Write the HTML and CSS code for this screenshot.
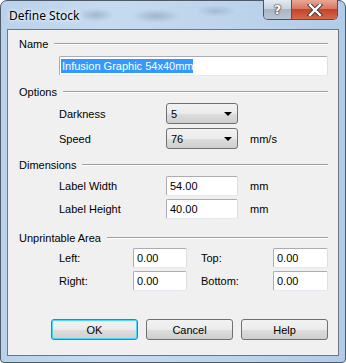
FILE: index.html
```html
<!DOCTYPE html>
<html lang="en">
<head>
  <meta charset="UTF-8" />
  <title>Define Stock</title>
  <link rel="stylesheet" href="styles.css">
</head>
<body>

  <div class="window">
    <div class="titlebar">
      <span class="title">Define Stock</span>
      <div class="caption-btns">
        <span class="cap-btn help-btn">?</span>
        <span class="cap-btn close-btn">
          <svg width="16" height="12" viewBox="0 0 16 12">
            <path d="M3 1 L13 11 M13 1 L3 11" stroke="#3a3a3a" stroke-width="4.2" stroke-linecap="square"/>
            <path d="M3 1 L13 11 M13 1 L3 11" stroke="#fff" stroke-width="2.4" stroke-linecap="square"/>
          </svg>
        </span>
      </div>
    </div>

    <div class="client">
      <div class="group-head head-name"><span>Name</span><i class="rule"></i></div>
      <div class="name-row">
        <div class="textbox"><span class="sel">Infusion Graphic 54x40mm</span></div>
      </div>

      <div class="group-head head-options"><span>Options</span><i class="rule"></i></div>
      <div class="grid options-grid">
        <label>Darkness</label>
        <div class="combo"><span>5</span><i class="arrow"></i></div>
        <span></span>
        <label>Speed</label>
        <div class="combo"><span>76</span><i class="arrow"></i></div>
        <span class="unit">mm/s</span>
      </div>

      <div class="group-head head-dims"><span>Dimensions</span><i class="rule"></i></div>
      <div class="grid dims-grid">
        <label>Label Width</label>
        <div class="textbox">54.00</div>
        <span class="unit">mm</span>
        <label>Label Height</label>
        <div class="textbox">40.00</div>
        <span class="unit">mm</span>
      </div>

      <div class="group-head head-area"><span>Unprintable Area</span><i class="rule"></i></div>
      <div class="grid area-grid">
        <label>Left:</label>
        <div class="textbox">0.00</div>
        <label class="second">Top:</label>
        <div class="textbox">0.00</div>
        <label>Right:</label>
        <div class="textbox">0.00</div>
        <label class="second">Bottom:</label>
        <div class="textbox">0.00</div>
      </div>

      <div class="buttons">
        <button class="default">OK</button>
        <button>Cancel</button>
        <button>Help</button>
      </div>
    </div>
  </div>

</body>
</html>
```

FILE: styles.css
```css
body {
  margin: 0;
  font-family: "Liberation Sans", Arial, sans-serif;
  font-size: 11px;
  color: #000;
  background: #fff;
}
.window {
  width: 346px;
  height: 363px;
  box-sizing: border-box;
  padding: 0 6px 6px 6px;
  border: 1px solid #4d5a68;
  border-radius: 7px 7px 4px 4px;
  background:
    radial-gradient(ellipse 18px 7px at 95px 14px, rgba(120,140,160,0.45), transparent),
    radial-gradient(ellipse 24px 7px at 155px 15px, rgba(120,140,160,0.45), transparent),
    radial-gradient(ellipse 20px 6px at 215px 10px, rgba(120,140,160,0.35), transparent),
    linear-gradient(90deg, #b9d1ea, #c6dbf0 30%, #bcd3ec 70%, #b2cbe6);
}
.titlebar {
  display: flex;
  justify-content: space-between;
  align-items: flex-start;
  height: 28px;
}
.title {
  font-family: "Noto Sans", "Open Sans", sans-serif;
  font-size: 12px;
  margin: 6px 0 0 2px;
  text-shadow: 0 0 6px #fff, 0 0 3px #fff;
}
.caption-btns {
  display: flex;
  margin-top: -1px;
  margin-right: 1px;
  border: 1px solid #4a5564;
  border-top: none;
  border-radius: 0 0 5px 5px;
  overflow: hidden;
  height: 19px;
}
.cap-btn {
  display: flex;
  align-items: center;
  justify-content: center;
  height: 19px;
}
.help-btn {
  width: 27px;
  border-right: 1px solid #4a5564;
  background: linear-gradient(#e4eaf1, #c9d3de 45%, #a9b6c5 50%, #b9c5d3);
  color: #fff;
  font-family: "DejaVu Sans", sans-serif;
  font-weight: bold;
  font-size: 13px;
  text-shadow: 0 0 1px #333, 0 0 1px #333, 0 0 2px #333;
}
.close-btn {
  width: 45px;
  background: linear-gradient(#e9a796, #d97762 45%, #c4442a 50%, #d4684a);
}
.client {
  box-sizing: border-box;
  height: 327px;
  border: 1px solid #6e7884;
  background: #f0f0f0;
  padding-top: 7px;
}
.group-head {
  display: flex;
  align-items: center;
  gap: 6px;
  height: 14px;
  padding: 0 10px 0 11px;
}
.rule {
  flex: 1;
  height: 0;
  border-top: 1px solid #a0a0a0;
  border-bottom: 1px solid #fff;
}
.head-options { margin-top: 9px; }
.head-dims { margin-top: 9px; }
.head-area { margin-top: 12px; }

.textbox {
  box-sizing: border-box;
  height: 20px;
  padding: 0 3px;
  line-height: 18px;
  background: #fff;
  border: 1px solid #abadb3;
  border-right-color: #dbdfe6;
  border-bottom-color: #e3e9ef;
  border-radius: 2px;
}
.name-row {
  margin: 5px 10px 0 51px;
}
.name-row .textbox {
  padding: 1px 1px 0 1px;
  line-height: 16px;
}
.sel {
  background: #3399ff;
  color: #fff;
  padding: 1px 0 1px 1px;
}
.grid {
  display: grid;
  margin-left: 51px;
  align-items: center;
}
.options-grid {
  margin-top: 4px;
  grid-template-columns: 107px 72px auto;
  grid-auto-rows: 21px;
  row-gap: 4px;
}
.dims-grid {
  margin-top: 4px;
  grid-template-columns: 107px 72px auto;
  grid-auto-rows: 20px;
  row-gap: 3px;
}
.unit {
  margin-left: 12px;
}
.area-grid {
  margin-top: 3px;
  grid-template-columns: 74px 54px 86px 55px;
  grid-auto-rows: 20px;
  row-gap: 3px;
}
.area-grid .second {
  padding-left: 14px;
}
.combo {
  box-sizing: border-box;
  height: 21px;
  display: flex;
  align-items: center;
  justify-content: space-between;
  padding: 0 3px 0 4px;
  border: 1px solid #707070;
  border-radius: 3px;
  background: linear-gradient(#f2f2f2, #ebebeb 50%, #dddddd 51%, #cfcfcf);
}
.arrow {
  width: 0;
  height: 0;
  margin-right: 2px;
  border-left: 4px solid transparent;
  border-right: 4px solid transparent;
  border-top: 4px solid #000;
}
.buttons {
  display: flex;
  gap: 8px;
  margin: 28px 0 0 43px;
}
button {
  box-sizing: border-box;
  width: 87px;
  height: 21px;
  padding: 0;
  font-family: "Liberation Sans", Arial, sans-serif;
  font-size: 11px;
  color: #000;
  border: 1px solid #707070;
  border-radius: 3px;
  background: linear-gradient(#f2f2f2, #ebebeb 50%, #dddddd 51%, #cfcfcf);
}
button.default {
  border-color: #3c7fb1;
  box-shadow: inset 0 0 0 1px #48d8fb;
}
```
